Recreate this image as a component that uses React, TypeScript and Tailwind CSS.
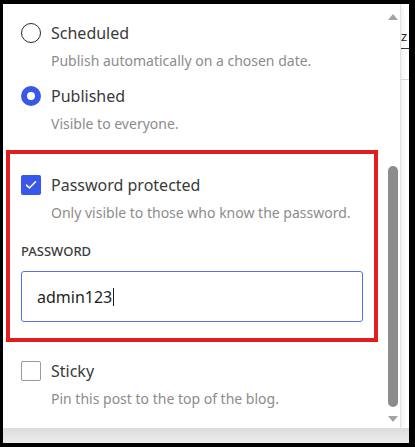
import React from "react";

const font = { fontFamily: '"Noto Sans", "Open Sans", sans-serif' };

type OptionProps = {
  control: React.ReactNode;
  title: string;
  description: string;
};

const Option = ({ control, title, description }: OptionProps) => (
  <div className="flex flex-col">
    <div className="flex h-[24px] items-center gap-[10px]">
      {control}
      <span className="text-[16px] leading-[24px] text-[#3a3a3a]">{title}</span>
    </div>
    <p className="mt-[6px] pl-[30px] text-[14px] leading-[20px] text-[#8c8c8c]">
      {description}
    </p>
  </div>
);

const Radio = ({ checked }: { checked?: boolean }) =>
  checked ? (
    <span className="size-[20px] flex-none rounded-full border-[6px] border-[#3858e9] bg-white" />
  ) : (
    <span className="size-[20px] flex-none rounded-full border-[1.5px] border-[#2a2a2a] bg-white" />
  );

const Checkbox = ({ checked }: { checked?: boolean }) =>
  checked ? (
    <span className="flex size-[20px] flex-none items-center justify-center rounded-[2px] bg-[#3858e9]">
      <svg width="12" height="10" viewBox="0 0 12 10" fill="none">
        <path
          d="M1.5 5.2 4.4 8 10.5 1.8"
          stroke="white"
          strokeWidth="1.6"
          strokeLinecap="round"
          strokeLinejoin="round"
        />
      </svg>
    </span>
  ) : (
    <span className="size-[20px] flex-none rounded-[2px] border border-[#9a9a9a] bg-white" />
  );

const Scrollbar = () => (
  <div className="flex w-[14px] flex-none flex-col items-center">
    <div className="mt-[10px] h-0 w-0 border-x-[5px] border-b-[6px] border-x-transparent border-b-[#a3a3a3]" />
    <div className="flex flex-1 flex-col items-center">
      <div className="mt-[146px] h-[241px] w-[10px] rounded-full bg-[#8c8c8c]" />
    </div>
    <div className="mb-[6px] h-0 w-0 border-x-[5px] border-t-[6px] border-x-transparent border-t-[#a3a3a3]" />
  </div>
);

export default function App() {
  return (
    <div className="h-[447px] w-[415px] bg-black pb-[4px] pl-[3px] pr-[6px] pt-[4px]" style={font}>
      <div className="flex h-full flex-col bg-[#e9e9e9]">
        <div className="flex h-[424px] bg-white">
          <div className="flex w-[398px] flex-none border-r border-[#e2e2e2] bg-white shadow-[0_2px_6px_rgba(0,0,0,0.12)]">
            <div className="flex flex-1 flex-col pl-[3px] pt-[17px]">
              <div className="pl-[15px]">
                <Option
                  control={<Radio />}
                  title="Scheduled"
                  description="Publish automatically on a chosen date."
                />
                <div className="mt-[13px]">
                  <Option
                    control={<Radio checked />}
                    title="Published"
                    description="Visible to everyone."
                  />
                </div>
              </div>

              <section className="mt-[16px] w-[372px] border-4 border-[#e11d1d] px-[11px] pb-[16px] pt-[19px]">
                <Option
                  control={<Checkbox checked />}
                  title="Password protected"
                  description="Only visible to those who know the password."
                />
                <label className="mt-[19px] block text-[13px] font-medium leading-[18px] text-[#3c3c3c]">
                  PASSWORD
                </label>
                <div className="mt-[11px] flex h-[51px] w-[342px] items-center rounded-[3px] border-[1.5px] border-[#5b70e6] pl-[15px]">
                  <span className="text-[16px] leading-[24px] text-[#1e1e1e]">admin123</span>
                  <span className="ml-[1px] h-[18px] w-px bg-[#1e1e1e]" />
                </div>
              </section>

              <div className="mt-[17px] pl-[15px]">
                <Option
                  control={<Checkbox />}
                  title="Sticky"
                  description="Pin this post to the top of the blog."
                />
              </div>
            </div>
            <Scrollbar />
          </div>
          <div className="flex flex-1 flex-col">
            <div className="mt-[20px] h-[24px] text-[13px] leading-[24px] text-[#222]">z</div>
            <div className="h-px bg-[#333]" />
            <div className="mt-[30px] h-px bg-[#d6d6d6]" />
          </div>
        </div>
        <div className="h-[15px] bg-gradient-to-b from-[#dcdcdc] to-[#ededed]" />
      </div>
    </div>
  );
}
